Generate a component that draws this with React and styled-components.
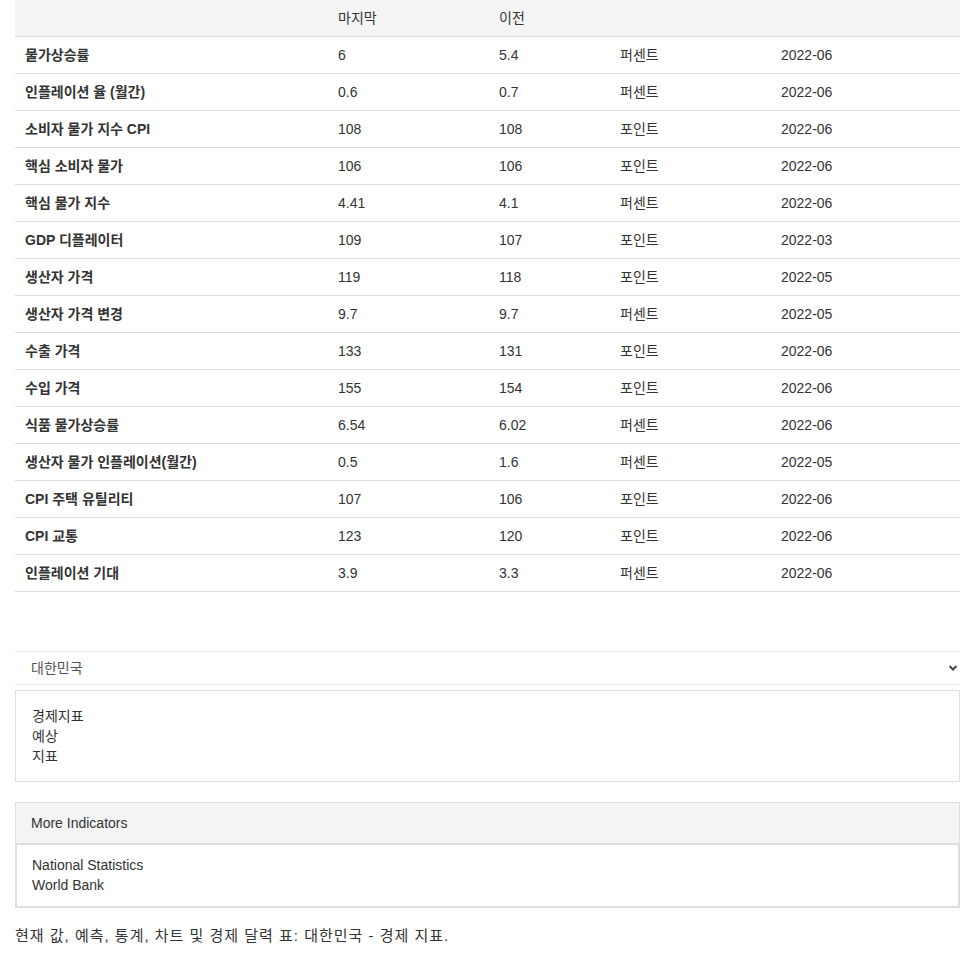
import React from "react";
import styled, { createGlobalStyle } from "styled-components";

const Global = createGlobalStyle`
  html, body { margin: 0; padding: 0; background: #fff; }
  body {
    font-family: "Liberation Sans", Arial, "Noto Sans CJK KR", sans-serif;
    font-size: 14px;
    line-height: 20px;
    color: #333;
  }
`;

const Page = styled.div`
  padding: 0 15px;
  width: 945px;
`;

const Table = styled.table`
  width: 100%;
  border-collapse: collapse;
  table-layout: fixed;
`;

const HeadRow = styled.tr`
  background: #f4f4f4;
`;

const Th = styled.th`
  height: 36px;
  padding: 0 10px;
  text-align: left;
  font-weight: normal;
  border-bottom: 1px solid #ddd;
  box-sizing: border-box;
  vertical-align: middle;
`;

const Td = styled.td`
  height: 37px;
  padding: 0 10px;
  border-bottom: 1px solid #ddd;
  box-sizing: border-box;
  vertical-align: middle;
  font-weight: ${(p) => (p.$bold ? "bold" : "normal")};
  white-space: nowrap;
`;

const Select = styled.div`
  margin-top: 59px;
  display: flex;
  align-items: center;
  justify-content: space-between;
  border-top: 1px solid #e6e6e6;
  border-bottom: 1px solid #e6e6e6;
  padding: 6px 2px 6px 16px;
  color: #555;
`;

const Box = styled.div`
  margin-top: 5px;
  border: 1px solid #ddd;
  padding: 15px 15px 15px 16px;
`;

const Panel = styled.div`
  margin-top: 20px;
  border: 1px solid #ddd;
`;

const PanelHead = styled.div`
  background: #f4f4f4;
  padding: 10px 15px;
  border-bottom: 1px solid #ddd;
`;

const PanelBody = styled.div`
  border: 1px solid #ddd;
  padding: 10px 15px 11px;
`;

const Footer = styled.p`
  margin: 17px 0 0;
  font-size: 15px;
  line-height: 22px;
  letter-spacing: 1px;
`;

const rows = [
  ["물가상승률", "6", "5.4", "퍼센트", "2022-06"],
  ["인플레이션 율 (월간)", "0.6", "0.7", "퍼센트", "2022-06"],
  ["소비자 물가 지수 CPI", "108", "108", "포인트", "2022-06"],
  ["핵심 소비자 물가", "106", "106", "포인트", "2022-06"],
  ["핵심 물가 지수", "4.41", "4.1", "퍼센트", "2022-06"],
  ["GDP 디플레이터", "109", "107", "포인트", "2022-03"],
  ["생산자 가격", "119", "118", "포인트", "2022-05"],
  ["생산자 가격 변경", "9.7", "9.7", "퍼센트", "2022-05"],
  ["수출 가격", "133", "131", "포인트", "2022-06"],
  ["수입 가격", "155", "154", "포인트", "2022-06"],
  ["식품 물가상승률", "6.54", "6.02", "퍼센트", "2022-06"],
  ["생산자 물가 인플레이션(월간)", "0.5", "1.6", "퍼센트", "2022-05"],
  ["CPI 주택 유틸리티", "107", "106", "포인트", "2022-06"],
  ["CPI 교통", "123", "120", "포인트", "2022-06"],
  ["인플레이션 기대", "3.9", "3.3", "퍼센트", "2022-06"],
];

const Chevron = () => (
  <svg width="10" height="8" viewBox="0 0 10 8">
    <path d="M1.5 2 L5 5.5 L8.5 2" fill="none" stroke="#444" strokeWidth="2" />
  </svg>
);

export default function App() {
  return (
    <>
      <Global />
      <Page>
        <Table>
          <colgroup>
            <col style={{ width: 313 }} />
            <col style={{ width: 161 }} />
            <col style={{ width: 121 }} />
            <col style={{ width: 161 }} />
            <col />
          </colgroup>
          <thead>
            <HeadRow>
              <Th></Th>
              <Th>마지막</Th>
              <Th>이전</Th>
              <Th></Th>
              <Th></Th>
            </HeadRow>
          </thead>
          <tbody>
            {rows.map((r) => (
              <tr key={r[0]}>
                <Td $bold>{r[0]}</Td>
                <Td>{r[1]}</Td>
                <Td>{r[2]}</Td>
                <Td>{r[3]}</Td>
                <Td>{r[4]}</Td>
              </tr>
            ))}
          </tbody>
        </Table>
        <Select>
          <span>대한민국</span>
          <Chevron />
        </Select>
        <Box>
          <div>경제지표</div>
          <div>예상</div>
          <div>지표</div>
        </Box>
        <Panel>
          <PanelHead>More Indicators</PanelHead>
          <PanelBody>
            <div>National Statistics</div>
            <div>World Bank</div>
          </PanelBody>
        </Panel>
        <Footer>현재 값, 예측, 통계, 차트 및 경제 달력 표: 대한민국 - 경제 지표.</Footer>
      </Page>
    </>
  );
}
